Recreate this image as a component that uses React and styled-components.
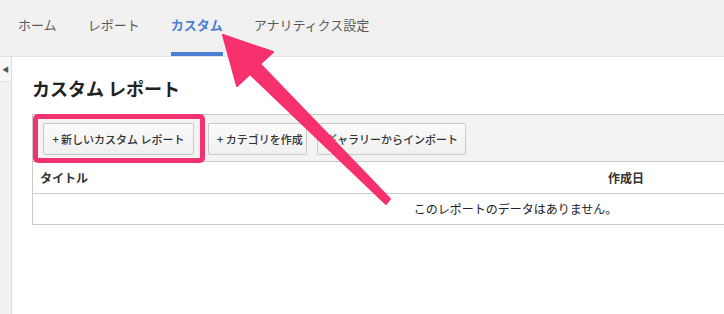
import React from "react";
import styled, { createGlobalStyle, css } from "styled-components";

const GlobalStyle = createGlobalStyle`
  * {
    margin: 0;
    padding: 0;
    box-sizing: border-box;
  }
  body {
    margin: 0;
    background: #fff;
    overflow: hidden;
    font-family: "Noto Sans CJK JP", "Liberation Sans", sans-serif;
  }
`;

const Page = styled.div`
  position: relative;
  width: 724px;
  height: 314px;
  overflow: hidden;
`;

const TopNav = styled.nav`
  display: flex;
  align-items: stretch;
  gap: 31px;
  height: 57px;
  padding-left: 18px;
  background: #f1f1f1;
  border-bottom: 1px solid #e2e2e2;
`;

const Tab = styled.div`
  display: flex;
  align-items: center;
  padding-bottom: 7px;
  font-size: 13px;
  color: #5a5a5a;
  ${(p) =>
    p.$active &&
    css`
      color: #4a7fd4;
      font-weight: bold;
      box-shadow: inset 0 -4px 0 #4a7fd4;
    `}
`;

const Body = styled.div`
  display: flex;
  height: 257px;
`;

const Sidebar = styled.aside`
  width: 12px;
  flex-shrink: 0;
  background: #f1f1f1;
  border-right: 1px solid #dcdcdc;
`;

const Collapse = styled.div`
  display: flex;
  align-items: center;
  justify-content: center;
  height: 25px;
  background: #f7f7f7;
  border-bottom: 1px solid #e0e0e0;
  color: #555;
  font-size: 7px;
`;

const Main = styled.main`
  flex: 1;
  min-width: 0;
  padding: 19px 0 0 20px;
`;

const Title = styled.h1`
  font-size: 18px;
  line-height: 24px;
  font-weight: bold;
  color: #222;
  margin-bottom: 14px;
`;

const Panel = styled.section`
  width: 967px;
  border: 1px solid #cacaca;
`;

const Toolbar = styled.div`
  display: flex;
  padding: 8px 10px 6px;
  background: #f3f3f3;
  border-bottom: 1px solid #cacaca;
`;

const ButtonWrap = styled.div`
  position: relative;
  margin-left: ${(p) => p.$gap || 0}px;
`;

const Highlight = styled.div`
  position: absolute;
  left: -10px;
  right: -11px;
  top: -9px;
  bottom: -8px;
  border: 5px solid #f2336f;
  border-radius: 5px;
  pointer-events: none;
`;

const Button = styled.button`
  height: 32px;
  width: ${(p) => p.$w}px;
  padding: 0 8px;
  font-family: inherit;
  font-size: 11px;
  font-weight: 500;
  color: #333;
  background: linear-gradient(#fbfbfb, #f0f0f0);
  border: 1px solid #c9c9c9;
  border-radius: 2px;
  white-space: nowrap;
`;

const HeaderRow = styled.div`
  display: grid;
  grid-template-columns: 568px 1fr;
  align-items: center;
  height: 32px;
  padding-left: 7px;
  font-size: 12px;
  font-weight: bold;
  color: #333;
  border-bottom: 1px solid #cacaca;
`;

const EmptyRow = styled.div`
  height: 30px;
  line-height: 30px;
  text-align: center;
  font-size: 12px;
  color: #222;
`;

const Annotation = styled.svg`
  position: absolute;
  left: 0;
  top: 0;
  pointer-events: none;
`;

const tabs = ["ホーム", "レポート", "カスタム", "アナリティクス設定"];

export default function App() {
  return (
    <Page>
      <GlobalStyle />
      <TopNav>
        {tabs.map((t) => (
          <Tab key={t} $active={t === "カスタム"}>
            {t}
          </Tab>
        ))}
      </TopNav>
      <Body>
        <Sidebar>
          <Collapse>◀</Collapse>
        </Sidebar>
        <Main>
          <Title>カスタム レポート</Title>
          <Panel>
            <Toolbar>
              <ButtonWrap>
                <Button $w={151}>+ 新しいカスタム レポート</Button>
                <Highlight />
              </ButtonWrap>
              <ButtonWrap $gap={14}>
                <Button $w={99}>+ カテゴリを作成</Button>
              </ButtonWrap>
              <ButtonWrap $gap={10}>
                <Button $w={149}>ギャラリーからインポート</Button>
              </ButtonWrap>
            </Toolbar>
            <HeaderRow>
              <span>タイトル</span>
              <span>作成日</span>
            </HeaderRow>
            <EmptyRow>このレポートのデータはありません。</EmptyRow>
          </Panel>
        </Main>
      </Body>
      <Annotation width="724" height="314" viewBox="0 0 724 314">
        <polygon
          points="223,35 273,52 260,64 390,199 386,204 250,74 237,86"
          fill="#f7306e"
          stroke="#f7306e"
          strokeWidth="2"
          strokeLinejoin="round"
        />
      </Annotation>
    </Page>
  );
}
